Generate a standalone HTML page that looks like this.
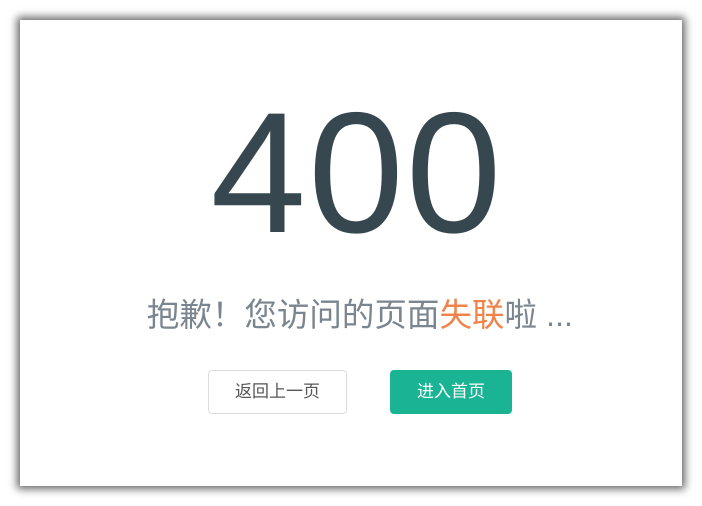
<!DOCTYPE html>
<html><head><meta charset="utf-8"><style>
html,body{margin:0;padding:0;background:#fff;width:702px;height:506px;overflow:hidden}
.card{position:absolute;left:20px;top:20px;width:662px;height:466px;background:#fff;box-shadow:0 0 8px 3px rgba(0,0,0,.6)}
.num{position:absolute;left:6px;width:662px;top:67px;text-align:center;font:172px/1 "Liberation Sans",sans-serif;color:#37474f;letter-spacing:2px}
.msg{position:absolute;left:9px;width:662px;top:279px;text-align:center;font:32.5px/1 "Liberation Sans","Noto Sans CJK SC",sans-serif;color:#7a8590;white-space:nowrap}
.msg span{color:#f0834a}
.b{position:absolute;top:350px;height:44px;box-sizing:border-box;border-radius:4px;font:17px/42px "Liberation Sans","Noto Sans CJK SC",sans-serif;text-align:center}
.b1{left:188px;width:139px;border:1px solid #dcdde3;color:#555}
.b2{left:370px;width:122px;background:#1ab394;color:#fff;border:1px solid #1ab394}
</style></head><body>
<div class="card">
<div class="num">400</div>
<div class="msg">抱歉！您访问的页面<span>失联</span>啦 ...</div>
<div class="b b1">返回上一页</div>
<div class="b b2">进入首页</div>
</div>
</body></html>
